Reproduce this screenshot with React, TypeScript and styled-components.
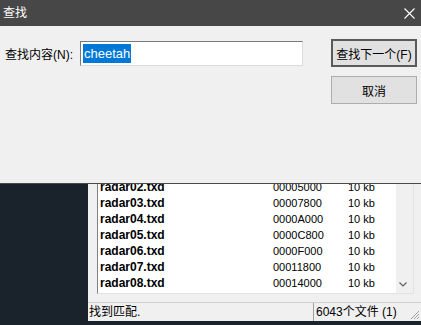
import React from "react";
import styled, { createGlobalStyle } from "styled-components";

const GlobalStyle = createGlobalStyle`
   html, body {
      margin: 0;
      padding: 0;
      background: #1a222c;
   }
`;

const UI_FONT = `"Liberation Sans", "Noto Sans CJK SC", sans-serif`;

const files = [0, 1, 2, 3, 4, 5, 6, 7, 8].map((i) => ({
   name: `radar${String(i).padStart(2, "0")}.txd`,
   offset: (i * 0x2800).toString(16).toUpperCase().padStart(8, "0"),
   size: "10 kb",
}));

function App() {
   return (
      <>
         <GlobalStyle />
         <Desktop>
            <AppWindow>
               <ListBox>
                  <ListBody>
                     {files.map((f) => (
                        <Row key={f.name}>
                           <NameCell>{f.name}</NameCell>
                           <Cell>{f.offset}</Cell>
                           <Cell>{f.size}</Cell>
                        </Row>
                     ))}
                  </ListBody>
                  <ScrollTrack>
                     <ScrollButton>
                        <svg width="8" height="5" viewBox="0 0 8 5">
                           <path d="M0.5 0.5 L4 4 L7.5 0.5" fill="none" stroke="#606060" strokeWidth="1.2" />
                        </svg>
                     </ScrollButton>
                  </ScrollTrack>
               </ListBox>
               <StatusBar>
                  <StatusPane $width={225}>找到匹配.</StatusPane>
                  <StatusPane $width={86} $sunken>6043个文件 (1)</StatusPane>
                  <Grip>
                     <svg width="12" height="12" viewBox="0 0 12 12">
                        <path d="M11 3 L3 11 M11 6 L6 11 M11 9 L9 11" stroke="#a0a0a0" strokeWidth="1" />
                     </svg>
                  </Grip>
               </StatusBar>
            </AppWindow>

            <Dialog>
               <TitleBar>
                  <Title>查找</Title>
                  <CloseBox>
                     <svg width="11" height="11" viewBox="0 0 11 11">
                        <path d="M0.5 0.5 L10.5 10.5 M10.5 0.5 L0.5 10.5" stroke="#ffffff" strokeWidth="1.1" />
                     </svg>
                  </CloseBox>
               </TitleBar>
               <DialogBody>
                  <FieldRow>
                     <Label>查找内容(N):</Label>
                     <TextField>
                        <Selected>cheetah</Selected>
                     </TextField>
                  </FieldRow>
                  <ButtonColumn>
                     <Button $primary>查找下一个(F)</Button>
                     <Button>取消</Button>
                  </ButtonColumn>
               </DialogBody>
            </Dialog>
         </Desktop>
      </>
   );
}

export default App;

const Desktop = styled.div`
   position: relative;
   width: 421px;
   height: 325px;
   overflow: hidden;
   display: flex;
   padding-left: 88px;
   box-sizing: border-box;
   background: #1a222c;
   font-family: ${UI_FONT};
`;

const AppWindow = styled.div`
   width: 333px;
   height: 321px;
   flex-shrink: 0;
   display: flex;
   flex-direction: column;
   background: #f0f0f0;
`;

const ListBox = styled.div`
   flex: 1;
   min-height: 0;
   display: flex;
   margin: 0 7px 8px 9px;
   border: 1px solid #828282;
   border-right-color: #e3e3e3;
   border-bottom-color: #e3e3e3;
   background: #fff;
`;

const ListBody = styled.div`
   flex: 1;
   min-width: 0;
   overflow: hidden;
   display: flex;
   flex-direction: column;
   justify-content: flex-end;
   padding: 0 0 2px 2px;
`;

const Row = styled.div`
   display: grid;
   grid-template-columns: 173px 75px 1fr;
   height: 16px;
   line-height: 16px;
   flex-shrink: 0;
   color: #000;
`;

const NameCell = styled.span`
   font-size: 12px;
   font-weight: bold;
`;

const Cell = styled.span`
   font-size: 11px;
`;

const ScrollTrack = styled.div`
   width: 17px;
   background: #f0f0f0;
   display: flex;
   flex-direction: column;
   justify-content: flex-end;
`;

const ScrollButton = styled.div`
   height: 17px;
   display: flex;
   align-items: center;
   justify-content: center;
   padding-right: 3px;
`;

const StatusBar = styled.div`
   height: 19px;
   display: flex;
   border-top: 1px solid #d0d0d0;
   box-sizing: border-box;
   font-size: 12px;
   line-height: 18px;
   color: #000;
`;

const StatusPane = styled.div<{ $width: number; $sunken?: boolean }>`
   width: ${(p) => p.$width}px;
   padding-left: ${(p) => (p.$sunken ? 2 : 1)}px;
   box-sizing: border-box;
   border-left: ${(p) => (p.$sunken ? "1px solid #a0a0a0" : "none")};
   white-space: nowrap;
   overflow: hidden;
`;

const Grip = styled.div`
   flex: 1;
   display: flex;
   align-items: flex-end;
   justify-content: flex-end;
   padding: 0 1px 1px 0;
`;

const Dialog = styled.div`
   position: absolute;
   top: 0;
   left: 0;
   width: 421px;
   height: 184px;
   box-sizing: border-box;
   background: #f0f0f0;
   border-bottom: 1px solid #4a4a4a;
   display: flex;
   flex-direction: column;
`;

const TitleBar = styled.div`
   height: 26px;
   background: #474747;
   display: flex;
   align-items: center;
   justify-content: space-between;
   padding: 0 6px 0 3px;
`;

const Title = styled.span`
   color: #fff;
   font-size: 12px;
   line-height: 26px;
`;

const CloseBox = styled.span`
   display: flex;
   align-items: center;
   margin-top: 1px;
`;

const DialogBody = styled.div`
   display: flex;
   justify-content: space-between;
   padding: 13px 4px 0 5px;
`;

const FieldRow = styled.div`
   display: flex;
   align-items: center;
   margin-top: 2px;
   height: 25px;
`;

const Label = styled.span`
   width: 75px;
   font-size: 12px;
   color: #000;
   white-space: nowrap;
`;

const TextField = styled.div`
   width: 223px;
   height: 25px;
   box-sizing: border-box;
   background: #fff;
   border: 1px solid #7a7a7a;
   border-right-color: #dcdcdc;
   border-bottom-color: #dcdcdc;
   padding: 2px 0 0 2px;
`;

const Selected = styled.span`
   display: inline-block;
   background: #0078d7;
   color: #fff;
   font-family: "Liberation Sans", sans-serif;
   font-size: 13px;
   line-height: 19px;
   padding: 0 1px;
`;

const ButtonColumn = styled.div`
   display: flex;
   flex-direction: column;
   gap: 9px;
`;

const Button = styled.div<{ $primary?: boolean }>`
   width: 86px;
   height: 28px;
   box-sizing: border-box;
   display: flex;
   align-items: center;
   justify-content: center;
   background: #e1e1e1;
   border: ${(p) => (p.$primary ? "2px solid #5a5a5a" : "1px solid #adadad")};
   font-size: 12px;
   color: #000;
   white-space: nowrap;
`;
